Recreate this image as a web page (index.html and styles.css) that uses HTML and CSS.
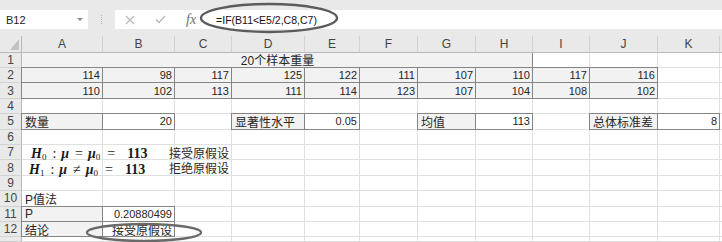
FILE: index.html
```html
<!DOCTYPE html>
<html lang="zh-CN">
<head>
    <meta charset="UTF-8">
    <title>样本重量 - 假设检验</title>
    <link rel="stylesheet" href="styles.css">
</head>
<body>
    <div class="app">
        <!-- Name box + formula bar -->
        <div class="toolbar">
            <div class="namebox"><span>B12</span><span class="dd"></span></div>
            <div class="grip"></div>
            <div class="fbar">
                <svg class="ico" width="10" height="10" viewBox="0 0 10 10"><path d="M1 1L9 9M9 1L1 9" stroke="#b8b8b8" stroke-width="1.2" fill="none"/></svg>
                <svg class="ico" width="11" height="9" viewBox="0 0 11 9"><path d="M1 4.5L4 7.5L10 1" stroke="#b8b8b8" stroke-width="1.3" fill="none"/></svg>
                <span class="fx">fx</span>
                <span class="formula">=IF(B11&lt;E5/2,C8,C7)</span>
            </div>
        </div>

        <!-- Sheet -->
        <div class="sheet">
            <div class="corner"><span class="tri"></span></div>
            <div class="ch">A</div><div class="ch">B</div><div class="ch">C</div><div class="ch">D</div><div class="ch">E</div><div class="ch">F</div><div class="ch">G</div><div class="ch">H</div><div class="ch">I</div><div class="ch">J</div><div class="ch">K</div><div class="ch end"></div>

            <div class="rh">1</div>
            <div class="c g merged">20个样本重量</div>
            <div class="c"></div><div class="c"></div><div class="c"></div><div class="c"></div>

            <div class="rh">2</div>
            <div class="c b g r n">114</div><div class="c b g r n">98</div><div class="c b g r n">117</div><div class="c b g r n">125</div><div class="c b g r n">122</div><div class="c b g r n">111</div><div class="c b g r n">107</div><div class="c b g r n">110</div><div class="c b g r n">117</div><div class="c b g r n">116</div>
            <div class="c"></div><div class="c"></div>

            <div class="rh">3</div>
            <div class="c b g r n">110</div><div class="c b g r n">102</div><div class="c b g r n">113</div><div class="c b g r n">111</div><div class="c b g r n">114</div><div class="c b g r n">123</div><div class="c b g r n">107</div><div class="c b g r n">104</div><div class="c b g r n">108</div><div class="c b g r n">102</div>
            <div class="c"></div><div class="c"></div>

            <div class="rh">4</div>
            <div class="c"></div><div class="c"></div><div class="c"></div><div class="c"></div><div class="c"></div><div class="c"></div><div class="c"></div><div class="c"></div><div class="c"></div><div class="c"></div><div class="c"></div><div class="c"></div>

            <div class="rh">5</div>
            <div class="c b g">数量</div><div class="c b r n">20</div>
            <div class="c"></div>
            <div class="c b g">显著性水平</div><div class="c b r n">0.05</div>
            <div class="c"></div>
            <div class="c b g">均值</div><div class="c b r n">113</div>
            <div class="c"></div>
            <div class="c b g">总体标准差</div><div class="c b r n">8</div>
            <div class="c"></div>

            <div class="rh">6</div>
            <div class="c"></div><div class="c"></div><div class="c"></div><div class="c"></div><div class="c"></div><div class="c"></div><div class="c"></div><div class="c"></div><div class="c"></div><div class="c"></div><div class="c"></div><div class="c"></div>

            <div class="rh">7</div>
            <div class="c"></div><div class="c"></div>
            <div class="c r">接受原假设</div>
            <div class="c"></div><div class="c"></div><div class="c"></div><div class="c"></div><div class="c"></div><div class="c"></div><div class="c"></div><div class="c"></div><div class="c"></div>

            <div class="rh">8</div>
            <div class="c"></div><div class="c"></div>
            <div class="c r">拒绝原假设</div>
            <div class="c"></div><div class="c"></div><div class="c"></div><div class="c"></div><div class="c"></div><div class="c"></div><div class="c"></div><div class="c"></div><div class="c"></div>

            <div class="rh">9</div>
            <div class="c"></div><div class="c"></div><div class="c"></div><div class="c"></div><div class="c"></div><div class="c"></div><div class="c"></div><div class="c"></div><div class="c"></div><div class="c"></div><div class="c"></div><div class="c"></div>

            <div class="rh">10</div>
            <div class="c">P值法</div>
            <div class="c"></div><div class="c"></div><div class="c"></div><div class="c"></div><div class="c"></div><div class="c"></div><div class="c"></div><div class="c"></div><div class="c"></div><div class="c"></div><div class="c"></div>

            <div class="rh">11</div>
            <div class="c b g">P</div><div class="c b r n">0.20880499</div>
            <div class="c"></div><div class="c"></div><div class="c"></div><div class="c"></div><div class="c"></div><div class="c"></div><div class="c"></div><div class="c"></div><div class="c"></div><div class="c"></div>

            <div class="rh">12</div>
            <div class="c b g">结论</div><div class="c b r">接受原假设</div>
            <div class="c"></div><div class="c"></div><div class="c"></div><div class="c"></div><div class="c"></div><div class="c"></div><div class="c"></div><div class="c"></div><div class="c"></div><div class="c"></div>

            <div class="rh"></div>
            <div class="c"></div><div class="c"></div><div class="c"></div><div class="c"></div><div class="c"></div><div class="c"></div><div class="c"></div><div class="c"></div><div class="c"></div><div class="c"></div><div class="c"></div><div class="c"></div>
        </div>

        <!-- embedded equation object -->
        <div class="eq">
            <div class="eq-line"><i>H</i><sub>0</sub><span class="op">:</span><i>μ</i><span class="op">=</span><i>μ</i><sub>0</sub><span class="op wide">=</span>113</div>
            <div class="eq-line second"><i>H</i><sub>1</sub><span class="op">:</span><i>μ</i><span class="op">≠</span><i>μ</i><sub>0</sub><span class="op wide">=</span>113</div>
        </div>

        <!-- hand-drawn marks -->
        <svg class="mark mark-formula" width="140" height="32" viewBox="0 0 140 32">
            <ellipse cx="70" cy="16" rx="68" ry="14" fill="none" stroke="#5c5c5c" stroke-width="2.4"/>
        </svg>
        <svg class="mark mark-b12" width="118" height="20" viewBox="0 0 118 20">
            <ellipse cx="59" cy="10.5" rx="57" ry="8.5" fill="none" stroke="#6a6a6a" stroke-width="2.3"/>
        </svg>
    </div>
</body>
</html>
```

FILE: styles.css
```css
* {
    margin: 0;
    padding: 0;
    box-sizing: border-box;
}

body {
    font-family: "Liberation Sans", "Noto Sans CJK SC", sans-serif;
    background: #fff;
    color: #222;
}

.app {
    position: relative;
    width: 722px;
    height: 242px;
    overflow: hidden;
}

/* ---- formula bar ---- */
.toolbar {
    height: 36px;
    background: #e9e9e9;
    display: flex;
    align-items: flex-start;
    padding-top: 10px;
}

.namebox {
    width: 88px;
    height: 19px;
    background: #fff;
    display: flex;
    align-items: center;
    justify-content: space-between;
    padding: 0 5px 0 6px;
    font-size: 11px;
}

.dd {
    width: 0;
    height: 0;
    border-left: 3px solid transparent;
    border-right: 3px solid transparent;
    border-top: 3px solid #8c8c8c;
}

.grip {
    width: 27px;
    height: 19px;
    display: flex;
    align-items: center;
    justify-content: center;
}

.grip::before {
    content: "";
    height: 9px;
    border-left: 1px dotted #b0b0b0;
}

.fbar {
    flex: 1;
    height: 19px;
    background: #fff;
    display: flex;
    align-items: center;
    padding-left: 10px;
}

.fbar .ico {
    margin-right: 20px;
}

.fx {
    font-family: "Liberation Serif", serif;
    font-style: italic;
    font-size: 14px;
    color: #707070;
    margin-right: 20px;
}

.formula {
    font-size: 10.5px;
    color: #111;
}

/* ---- sheet grid ---- */
.sheet {
    display: grid;
    grid-template-columns: 22px 81px 72px 57px 73px 55px 58px 58px 57px 57px 68px 62px 1fr;
    grid-template-rows: 16.6px repeat(12, 15.4px) 1fr;
    height: 206px;
}

.corner {
    background: #e9e9e9;
    border-right: 1px solid #b8b8b8;
    border-bottom: 1px solid #b8b8b8;
    position: relative;
}

.tri {
    position: absolute;
    right: 2px;
    bottom: 2px;
    width: 0;
    height: 0;
    border-left: 9px solid transparent;
    border-bottom: 11px solid #c2c2c2;
}

.ch {
    background: #e9e9e9;
    border-right: 1px solid #d2d2d2;
    border-bottom: 1px solid #b8b8b8;
    font-size: 12px;
    color: #444;
    display: flex;
    align-items: center;
    justify-content: center;
}

.ch.end {
    border-right: none;
}

.rh {
    background: #e9e9e9;
    border-right: 1px solid #b8b8b8;
    border-bottom: 1px solid #d2d2d2;
    font-size: 12px;
    color: #444;
    display: flex;
    align-items: center;
    justify-content: center;
}

.c {
    border-right: 1px solid #e0e0e0;
    border-bottom: 1px solid #e0e0e0;
    display: flex;
    align-items: center;
    padding: 0 2px 0 3px;
    font-size: 12px;
    white-space: nowrap;
    color: #262626;
}

.c.g {
    background: #f2f2f2;
}

.c.r {
    justify-content: flex-end;
}

.c.n {
    font-size: 11px;
}

/* cell with a drawn border: grow one pixel over the neighbours' gridlines */
.c.b {
    border: 1px solid #858585;
    margin: -1px 0 0 -1px;
}

.merged {
    grid-column: span 8;
    justify-content: center;
    border-right-color: #858585;
}

/* ---- embedded equation ---- */
.eq {
    position: absolute;
    left: 31px;
    top: 146px;
    font-family: "Liberation Serif", serif;
    font-weight: bold;
    font-size: 14px;
    color: #1a1a1a;
}

.eq-line {
    height: 16px;
    line-height: 16px;
    white-space: nowrap;
}

.eq-line.second {
    margin-left: -2px;
}

.eq sub {
    font-size: 9px;
    font-weight: normal;
    vertical-align: -2px;
    line-height: 0;
}

.eq .op {
    margin: 0 5px 0 6px;
    font-weight: normal;
}

.eq .op.wide {
    margin: 0 12px 0 7px;
}

/* ---- hand-drawn ellipses ---- */
.mark {
    position: absolute;
}

.mark-formula {
    left: 199px;
    top: 2px;
}

.mark-b12 {
    left: 85px;
    top: 222px;
}
```
